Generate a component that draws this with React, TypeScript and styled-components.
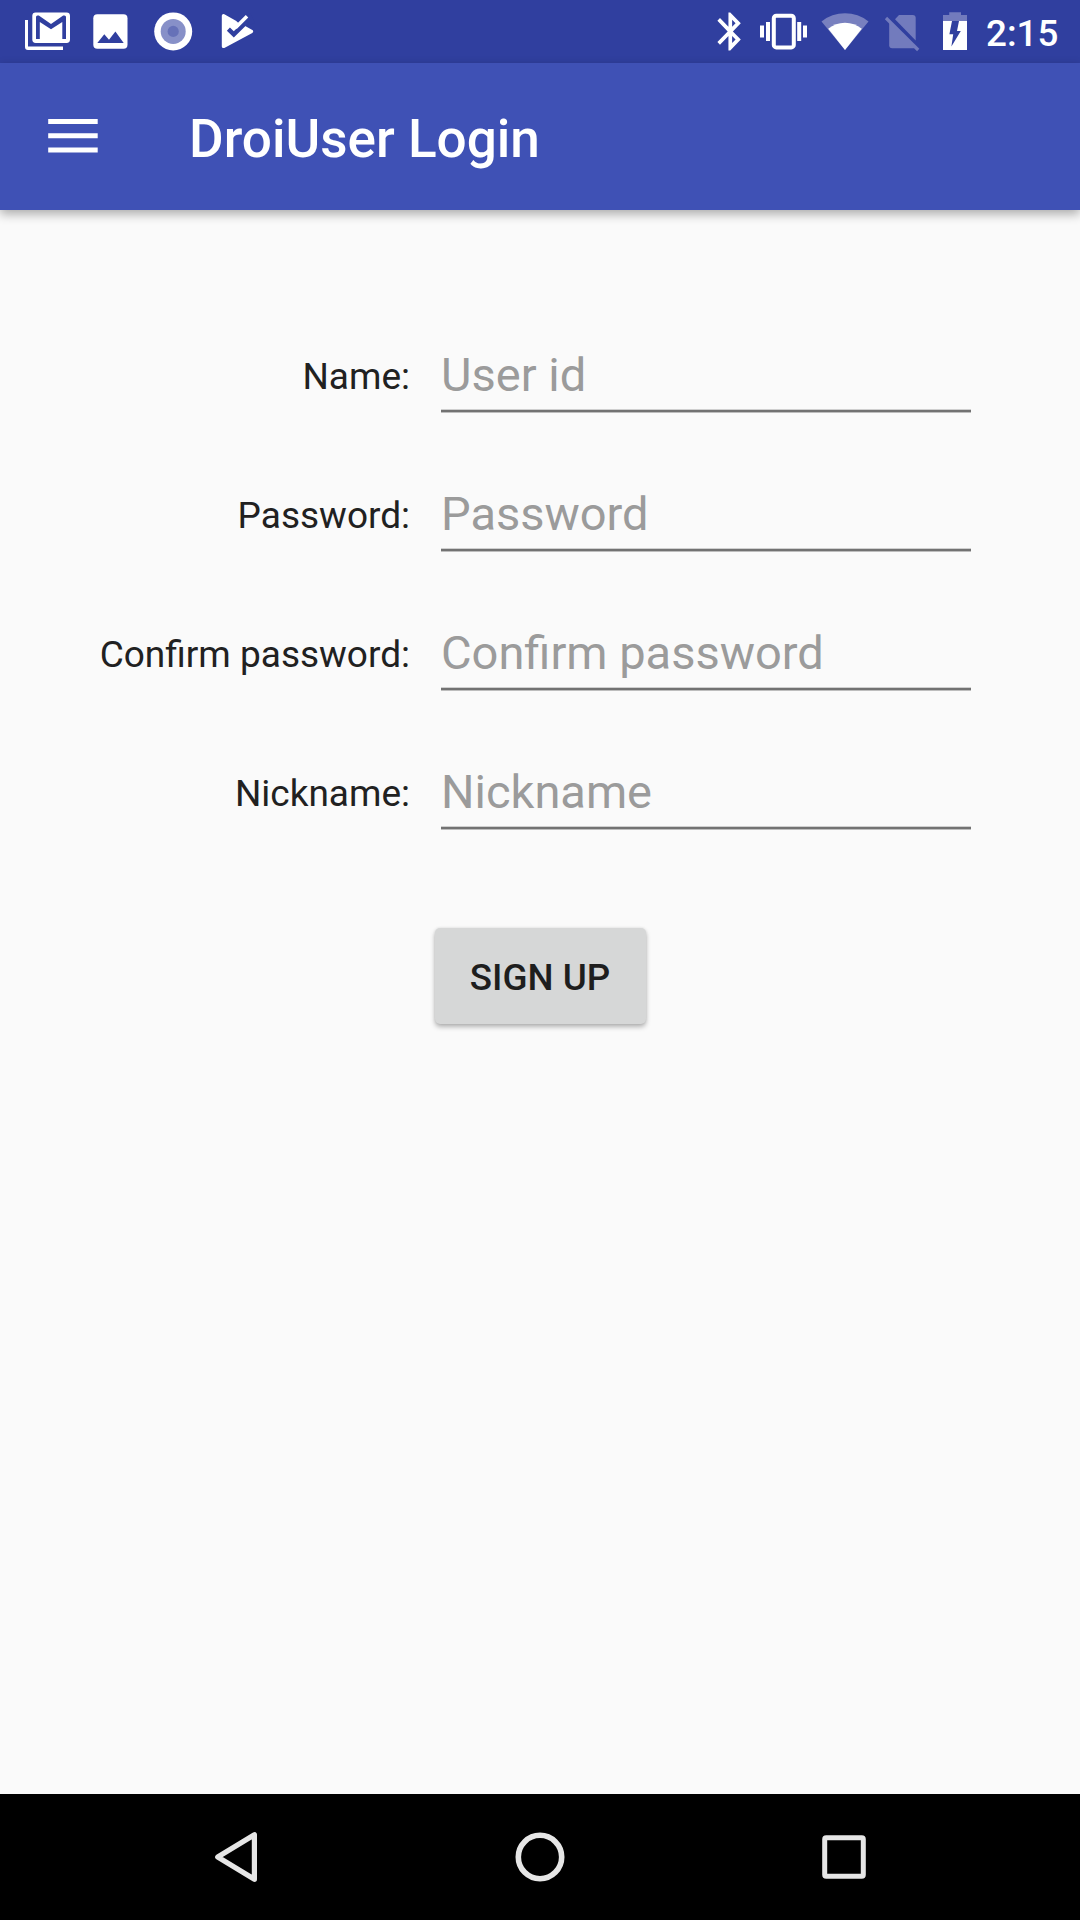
import React from "react";
import styled, { createGlobalStyle } from "styled-components";

const GlobalStyle = createGlobalStyle`
  * { box-sizing: border-box; }
  html, body { margin: 0; padding: 0; background: #fafafa; }
  body, input, button { font-family: Roboto, "Noto Sans", sans-serif; }
`;

const Screen = styled.div`
  width: 1080px;
  height: 1920px;
  display: flex;
  flex-direction: column;
  overflow: hidden;
  background: #fafafa;
`;

const StatusBar = styled.header`
  height: 63px;
  flex: none;
  display: flex;
  justify-content: space-between;
  padding: 0 19px 0 24px;
  background: #303f9f;
`;

const IconGroup = styled.div`
  display: flex;
  align-items: flex-start;
`;

const Glyph = styled.svg<{ $before?: number }>`
  display: block;
  flex: none;
  margin-left: ${(p) => p.$before ?? 0}px;
`;

const Clock = styled.time`
  width: 75px;
  margin-left: 19px;
  font-size: 36.75px;
  font-weight: 500;
  line-height: 67px;
  color: #fff;
  white-space: nowrap;
`;

const Toolbar = styled.div`
  height: 147px;
  flex: none;
  display: flex;
  align-items: center;
  padding-left: 42px;
  background: #3f51b5;
  box-shadow: 0 4px 10px rgba(0, 0, 0, 0.32);
`;

const MenuButton = styled.button`
  width: 63px;
  height: 63px;
  padding: 0;
  border: 0;
  background: none;
`;

const Title = styled.h1`
  margin: 0 0 0 84px;
  padding-top: 4px;
  font-size: 53.1px;
  font-weight: 500;
  line-height: 62px;
  color: #fff;
`;

const Form = styled.form`
  flex: 1;
  display: flex;
  flex-direction: column;
  align-items: center;
  padding-top: 131px;
`;

const Fields = styled.div`
  width: 1080px;
  display: flex;
  flex-direction: column;
  gap: 67px;
`;

const Field = styled.label`
  height: 72px;
  display: grid;
  grid-template-columns: 410px 530px;
  column-gap: 31px;
`;

const Caption = styled.span`
  text-align: right;
  font-size: 37px;
  line-height: 71px;
  color: #212121;
`;

const Entry = styled.span`
  display: flex;
  flex-direction: column;

  &::after {
    content: "";
    height: 4px;
    background: linear-gradient(#cfcfcf 1px, #727272 1px, #727272 3px, #bdbdbd 3px);
  }
`;

const Input = styled.input`
  width: 100%;
  height: 68px;
  padding: 0;
  border: 0;
  outline: 0;
  background: transparent;
  font-size: 47px;
  line-height: 68px;
  color: #212121;

  &::placeholder {
    color: #9b9b9b;
    opacity: 1;
  }
`;

const SubmitButton = styled.button`
  width: 211px;
  height: 96px;
  margin: 98px 0 0 1px;
  padding: 3px 1px 0 0;
  border: 0;
  border-radius: 5px;
  background: #d6d7d7;
  box-shadow: 0 3px 5px rgba(0, 0, 0, 0.28), 0 0 3px rgba(0, 0, 0, 0.1);
  font-size: 36.75px;
  font-weight: 500;
  line-height: 43px;
  color: #1e1e1e;
`;

const NavBar = styled.nav`
  height: 126px;
  flex: none;
  display: flex;
  justify-content: center;
  background: #000;
`;

const NavButton = styled.button`
  width: 304px;
  height: 126px;
  display: flex;
  justify-content: center;
  padding: 0;
  border: 0;
  background: none;
`;

const fields = [
  { label: "Name:", hint: "User id", type: "text" },
  { label: "Password:", hint: "Password", type: "password" },
  { label: "Confirm password:", hint: "Confirm password", type: "password" },
  { label: "Nickname:", hint: "Nickname", type: "text" },
];

const MailIcon = () => (
  <Glyph width="48" height="63" viewBox="24 0 48 63">
    <path d="M25 20h3v26.4h35V50H28a3 3 0 0 1-3-3z" fill="#fff" />
    <rect x="32.3" y="12.4" width="37.7" height="30.6" rx="3.4" fill="#fff" />
    <path d="M36 39V17q0-1.5 1.5-1.5h1.3L51 24.1l12.2-8.6h1.3q1.5 0 1.5 1.5v22h-3.7V22.1L51 29.3l-11.2-7.2V39z" fill="#303f9f" />
  </Glyph>
);

const ImageIcon = () => (
  <Glyph $before={21} width="35" height="63" viewBox="93 0 35 63">
    <rect x="93.3" y="14.3" width="34.2" height="34.4" rx="4" fill="#fff" />
    <path d="M97.3 43l7-8.8 4.7 5.6 6.4-8.4 8.3 11.6z" fill="#303f9f" />
  </Glyph>
);

const RecordIcon = () => (
  <Glyph $before={25} width="40" height="63" viewBox="153 0 40 63">
    <circle cx="173.2" cy="31.4" r="19" fill="#fff" />
    <circle cx="173.2" cy="31.4" r="12.5" fill="#8790c8" />
    <circle cx="173.2" cy="31.4" r="5.6" fill="#6671b8" />
  </Glyph>
);

const PlayCheckIcon = () => (
  <Glyph $before={28} width="34" height="63" viewBox="221 0 34 63">
    <path d="M223.5 15.8v30.6L251.5 31.4z" fill="#fff" stroke="#fff" strokeWidth="3.4" strokeLinejoin="round" />
    <path d="M236 20.5l3 3.2L250 13l5 10-5 2z" fill="#303f9f" />
    <path d="M228.4 29.2l5.4 5.2L247 21.4" fill="none" stroke="#303f9f" strokeWidth="4.4" />
    <path d="M247 16.3L235.5 27.8" stroke="#fff" strokeWidth="3.6" />
  </Glyph>
);

const BluetoothIcon = () => (
  <Glyph width="24" height="63" viewBox="717 0 24 63">
    <path
      transform="translate(708.2 8.6) scale(1.84 1.9)"
      d="M17.71 7.71L12 2h-1v7.59L6.41 5 5 6.41 10.59 12 5 17.59 6.41 19 11 14.41V22h1l5.71-5.71-4.3-4.29 4.3-4.29zM13 5.83l1.88 1.88L13 9.59V5.83zm1.88 10.46L13 18.17v-3.76l1.88 1.88z"
      fill="#fff"
    />
  </Glyph>
);

const VibrateIcon = () => (
  <Glyph $before={18} width="48" height="63" viewBox="759 0 48 63">
    <rect x="773.8" y="15.8" width="20" height="31.6" rx="2.5" fill="none" stroke="#fff" strokeWidth="4" />
    <path d="M760 25.5h4v12h-4zM766 22h4v19h-4zM797.2 22h4v19h-4zM803 25.5h4v12h-4z" fill="#fff" />
  </Glyph>
);

const WifiIcon = () => (
  <Glyph $before={14} width="48" height="63" viewBox="821 0 48 63">
    <path d="M821.5 21.5a37.5 37.5 0 0 1 47 0L845 50z" fill="#7880bf" />
    <path d="M828.2 28.7a26.5 26.5 0 0 1 33.6 0L845 50z" fill="#fff" />
  </Glyph>
);

const NoSimIcon = () => (
  <Glyph $before={15} width="36" height="63" viewBox="884 0 36 63">
    <path d="M899 15h13.7q3 0 3 3v22.6L895 19.3z" fill="#727bbd" />
    <path d="M889.2 21.2L914.8 47.4q-.8.9-2.5.9h-20.1q-3 0-3-3z" fill="#727bbd" />
    <path d="M886 18l32.2 32" stroke="#727bbd" strokeWidth="3.2" />
  </Glyph>
);

const BatteryIcon = () => (
  <Glyph $before={23} width="24" height="63" viewBox="943 0 24 63">
    <path d="M943 15h6.2v-2.8H961V15h6v6.2h-24z" fill="#727bbd" />
    <path d="M943 21h24v29h-24z" fill="#fff" />
    <path d="M952 21h7l-2 10h3.8l-9.4 15.5 1.8-12.2H949.4z" fill="#303f9f" />
  </Glyph>
);

export default function App() {
  return (
    <Screen>
      <GlobalStyle />
      <StatusBar>
        <IconGroup>
          <MailIcon />
          <ImageIcon />
          <RecordIcon />
          <PlayCheckIcon />
        </IconGroup>
        <IconGroup>
          <BluetoothIcon />
          <VibrateIcon />
          <WifiIcon />
          <NoSimIcon />
          <BatteryIcon />
          <Clock>2:15</Clock>
        </IconGroup>
      </StatusBar>

      <Toolbar>
        <MenuButton type="button" aria-label="Menu">
          <Glyph width="63" height="63" viewBox="42 105 63 63">
            <path d="M48.2 119h49.5v5H48.2zM48.2 133.2h49.5v5H48.2zM48.2 147.4h49.5v5H48.2z" fill="#fff" />
          </Glyph>
        </MenuButton>
        <Title>DroiUser Login</Title>
      </Toolbar>

      <Form>
        <Fields>
          {fields.map((f) => (
            <Field key={f.label}>
              <Caption>{f.label}</Caption>
              <Entry>
                <Input type={f.type} placeholder={f.hint} />
              </Entry>
            </Field>
          ))}
        </Fields>
        <SubmitButton type="button">SIGN UP</SubmitButton>
      </Form>

      <NavBar>
        <NavButton type="button" aria-label="Back">
          <Glyph width="60" height="126" viewBox="206 1794 60 126">
            <path d="M254.4 1834.7v44.6L217.7 1857z" fill="none" stroke="#e6e6e6" strokeWidth="5.2" strokeLinejoin="round" />
          </Glyph>
        </NavButton>
        <NavButton type="button" aria-label="Home">
          <Glyph width="60" height="126" viewBox="510 1794 60 126">
            <circle cx="540" cy="1857" r="21.7" fill="none" stroke="#e6e6e6" strokeWidth="5.6" />
          </Glyph>
        </NavButton>
        <NavButton type="button" aria-label="Overview">
          <Glyph width="60" height="126" viewBox="814 1794 60 126">
            <rect x="824.7" y="1837.7" width="38.6" height="38.6" rx="1.5" fill="none" stroke="#e6e6e6" strokeWidth="5" />
          </Glyph>
        </NavButton>
      </NavBar>
    </Screen>
  );
}
